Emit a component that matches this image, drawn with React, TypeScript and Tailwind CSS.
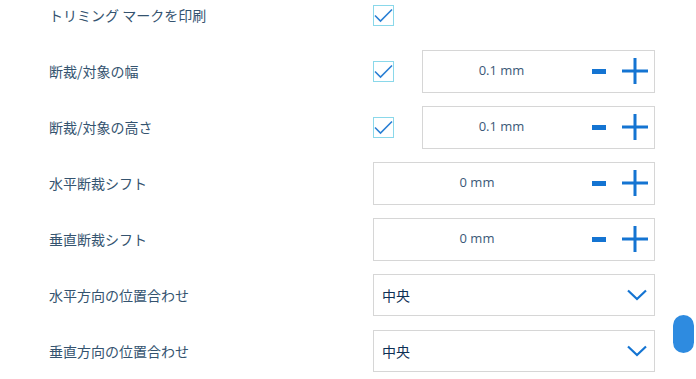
import { ReactNode } from 'react';

const labelFont = { fontFamily: '"Noto Sans CJK JP", "Noto Sans", sans-serif' };

const Check = () => (
  <div className="w-[21px] h-[21px] border border-[#8ad8ea] bg-white flex items-center justify-center">
    <svg width="19" height="19" viewBox="0 0 19 19">
      <path d="M1 9.5 L6.5 15 L18 3.5" fill="none" stroke="#2a7fd4" strokeWidth="1.6" />
    </svg>
  </div>
);

const Stepper = ({ value }: { value: string }) => (
  <div className="flex-1 h-[43px] border border-[#d6d6d6] bg-white flex items-center">
    <div
      className="flex-1 text-center text-[13px] text-[#3b5878]"
      style={{ fontFamily: '"Open Sans", "Noto Sans", sans-serif' }}
    >
      {value}
    </div>
    <div className="flex items-center gap-[16px] pr-[6px] pl-[12px]">
      <div className="w-[14px] h-[5px] bg-[#1474d2]" />
      <svg width="26" height="26" viewBox="0 0 26 26">
        <path d="M13 0 V26 M0 13 H26" stroke="#1474d2" strokeWidth="3" />
      </svg>
    </div>
  </div>
);

const Select = () => (
  <div className="flex-1 h-[42px] border border-[#d6d6d6] bg-white flex items-center justify-between pl-[8px] pr-[7px]">
    <span className="text-[14px] text-[#0d2f55]" style={labelFont}>
      中央
    </span>
    <svg width="20" height="12" viewBox="0 0 20 12">
      <path d="M1 1.5 L10 10 L19 1.5" fill="none" stroke="#1474d2" strokeWidth="2.2" />
    </svg>
  </div>
);

const Row = ({ label, children }: { label: string; children: ReactNode }) => (
  <div className="flex items-center h-[56px]">
    <div className="w-[373px] shrink-0 pl-[49px] text-[14px] text-[#34536f]" style={labelFont}>
      {label}
    </div>
    <div className="w-[282px] flex items-center">{children}</div>
  </div>
);

export default function App() {
  return (
    <div className="relative w-[696px] h-[379px] bg-white overflow-hidden">
      <div className="flex flex-col mt-[-13px]">
        <Row label="トリミング マークを印刷">
          <Check />
        </Row>
        <Row label="断裁/対象の幅">
          <Check />
          <div className="w-[28px]" />
          <Stepper value="0.1 mm" />
        </Row>
        <Row label="断裁/対象の高さ">
          <Check />
          <div className="w-[28px]" />
          <Stepper value="0.1 mm" />
        </Row>
        <Row label="水平断裁シフト">
          <Stepper value="0 mm" />
        </Row>
        <Row label="垂直断裁シフト">
          <Stepper value="0 mm" />
        </Row>
        <Row label="水平方向の位置合わせ">
          <Select />
        </Row>
        <Row label="垂直方向の位置合わせ">
          <Select />
        </Row>
      </div>
      <div className="absolute left-[673px] top-[315px] w-[21px] h-[38px] rounded-full bg-[#2e8be0]" />
    </div>
  );
}
